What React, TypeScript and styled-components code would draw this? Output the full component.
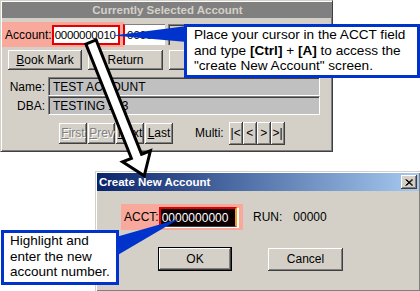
import React from "react";
import styled, { createGlobalStyle } from "styled-components";

const Global = createGlobalStyle`
  html, body { margin: 0; padding: 0; background: #fff; }
  body { width: 420px; height: 291px; overflow: hidden; font-family: "Liberation Sans", Arial, sans-serif; }
`;

const Canvas = styled.div`
  position: relative;
  width: 420px;
  height: 291px;
  background: #fff;
  overflow: hidden;
`;

const WinFrame = styled.div<{ $x: number; $y: number; $w: number; $h: number }>`
  position: absolute;
  left: ${(p) => p.$x}px;
  top: ${(p) => p.$y}px;
  width: ${(p) => p.$w}px;
  height: ${(p) => p.$h}px;
  box-sizing: border-box;
  background: #d4d0c8;
  border: 1px solid;
  border-color: #d4d0c8 #404040 #404040 #d4d0c8;
  box-shadow: inset 1px 1px #fff, inset -1px -1px #808080;
  padding: 1px;
  display: flex;
  flex-direction: column;
  font-size: 11px;
  color: #000;
`;

const InactiveTitle = styled.div`
  height: 16px;
  background: #808080;
  color: #d4d0c8;
  font-weight: bold;
  font-size: 11.5px;
  display: flex;
  align-items: center;
  justify-content: center;
  padding-left: 2px;
`;

const ActiveTitle = styled.div`
  height: 18px;
  background: linear-gradient(to right, #0a246a, #a6caf0);
  color: #fff;
  font-weight: bold;
  font-size: 11.5px;
  display: flex;
  align-items: center;
  justify-content: space-between;
  padding: 0 2px 0 2px;
`;

const CloseBtn = styled.div`
  width: 16px;
  height: 14px;
  box-sizing: border-box;
  background: #d4d0c8;
  box-shadow: inset -1px -1px #404040, inset 1px 1px #fff, inset -2px -2px #808080;
  display: flex;
  align-items: center;
  justify-content: center;
`;

const Row = styled.div<{ $mt: number; $h: number; $pl?: number; $gap?: number }>`
  display: flex;
  align-items: center;
  margin-top: ${(p) => p.$mt}px;
  height: ${(p) => p.$h}px;
  padding-left: ${(p) => p.$pl ?? 0}px;
  gap: ${(p) => p.$gap ?? 0}px;
`;

const Highlight = styled.div<{ $w: number; $h: number; $pl: number; $pr: number }>`
  display: flex;
  align-items: center;
  justify-content: space-between;
  box-sizing: border-box;
  width: ${(p) => p.$w}px;
  height: ${(p) => p.$h}px;
  padding: 0 ${(p) => p.$pr}px 0 ${(p) => p.$pl}px;
  background: #f9a99b;
  font-size: 12px;
`;

const AcctInput = styled.div`
  box-sizing: border-box;
  width: 69px;
  height: 20px;
  border: 2px solid #e40000;
  background: #fff;
  font-size: 11.5px;
  letter-spacing: -0.3px;
  display: flex;
  align-items: center;
  padding-left: 1px;
`;

const PlainInput = styled.div<{ $w: number; $gray?: boolean }>`
  box-sizing: border-box;
  width: ${(p) => p.$w}px;
  height: 21px;
  background: ${(p) => (p.$gray ? "#d4d0c8" : "#fff")};
  border-top: 1px solid #808080;
  border-left: ${(p) => (p.$gray ? "1px solid #808080" : "2px solid #e40000")};
  box-shadow: ${(p) => (p.$gray ? "inset 1px 1px #404040" : "none")};
  font-size: 11.5px;
  display: flex;
  align-items: center;
  padding-left: 2px;
`;

const Button = styled.div<{ $w: number; $h: number; $default?: boolean; $disabled?: boolean }>`
  box-sizing: border-box;
  width: ${(p) => p.$w}px;
  height: ${(p) => p.$h}px;
  background: #d4d0c8;
  border: ${(p) => (p.$default ? "1px solid #000" : "none")};
  box-shadow: inset -1px -1px #404040, inset 1px 1px #fff, inset -2px -2px #808080;
  display: flex;
  align-items: center;
  justify-content: center;
  font-size: 12px;
  color: ${(p) => (p.$disabled ? "#808080" : "#000")};
  text-shadow: ${(p) => (p.$disabled ? "1px 1px #fff" : "none")};
  flex-shrink: 0;
`;

const U = styled.span`
  text-decoration: underline;
`;

const FieldLabel = styled.div`
  width: 43px;
  text-align: right;
  font-size: 12px;
  margin-right: 3px;
`;

const Field = styled.div<{ $h: number }>`
  box-sizing: border-box;
  width: 272px;
  height: ${(p) => p.$h}px;
  background: #c0c0c0;
  border-top: 1px solid #808080;
  border-left: 1px solid #808080;
  border-right: 1px solid #fff;
  border-bottom: 1px solid #fff;
  box-shadow: inset 1px 1px #404040;
  font-size: 12px;
  display: flex;
  align-items: center;
  padding-left: 4px;
`;

const NavGroup = styled.div`
  display: flex;
  gap: 1px;
  margin-left: 57px;
`;

const MultiLabel = styled.div`
  font-size: 12px;
  margin-left: 22px;
  margin-right: 5px;
`;

const MultiGroup = styled.div`
  display: flex;
`;

const DlgBody = styled.div`
  display: flex;
  flex-direction: column;
`;

const DlgInput = styled.div`
  box-sizing: border-box;
  width: 79px;
  height: 20px;
  background: #0c0000;
  color: #fff;
  border-top: 2px solid #e40000;
  border-left: 2px solid #e40000;
  border-right: 2px solid #f0a020;
  border-bottom: 1px solid #404040;
  box-shadow: 2px 1px 0 #fff;
  font-size: 12px;
  display: flex;
  align-items: center;
  padding-left: 1px;
`;

const RunLabel = styled.div`
  font-size: 12px;
  margin-left: 10px;
  display: flex;
  gap: 11px;
`;

const Callout = styled.div<{ $x: number; $y: number; $w: number; $h: number; $pl: number; $fs: number }>`
  position: absolute;
  left: ${(p) => p.$x}px;
  top: ${(p) => p.$y}px;
  width: ${(p) => p.$w}px;
  height: ${(p) => p.$h}px;
  box-sizing: border-box;
  border: 3px solid #0033cc;
  background: #fff;
  padding: 0 0 0 ${(p) => p.$pl}px;
  font-size: ${(p) => p.$fs}px;
  line-height: 15.5px;
  color: #000;
  white-space: nowrap;
`;

const Overlay = styled.svg`
  position: absolute;
  left: 0;
  top: 0;
  pointer-events: none;
`;

export default function App() {
  return (
    <Canvas>
      <Global />
      <WinFrame $x={0} $y={0} $w={333} $h={152}>
        <InactiveTitle>Currently Selected Account</InactiveTitle>
        <Row $mt={4} $h={25}>
          <Highlight $w={122} $h={25} $pl={3} $pr={4}>
            <span>Account:</span>
            <AcctInput>0000000010</AcctInput>
          </Highlight>
          <PlainInput $w={42} style={{ marginLeft: -1 }}>00000</PlainInput>
          <PlainInput $w={16} $gray style={{ marginLeft: 3 }}>0</PlainInput>
        </Row>
        <Row $mt={3} $h={20} $pl={6} $gap={6}>
          <Button $w={74} $h={20}><span><U>B</U>ook Mark</span></Button>
          <Button $w={75} $h={20}>Return</Button>
          <Button $w={75} $h={20} aria-hidden="true" />
        </Row>
        <Row $mt={7} $h={19}>
          <FieldLabel>Name:</FieldLabel>
          <Field $h={19}>TEST ACCOUNT</Field>
        </Row>
        <Row $mt={0} $h={19}>
          <FieldLabel>DBA:</FieldLabel>
          <Field $h={19}>TESTING 123</Field>
        </Row>
        <Row $mt={7} $h={22}>
          <NavGroup>
            <Button $w={28} $h={21} $disabled><span><U>F</U>irst</span></Button>
            <Button $w={27} $h={21} $disabled><span><U>P</U>rev</span></Button>
            <Button $w={28} $h={21}><span><U>N</U>ext</span></Button>
            <Button $w={28} $h={21}><span><U>L</U>ast</span></Button>
          </NavGroup>
          <MultiLabel>Multi:</MultiLabel>
          <MultiGroup>
            <Button $w={14} $h={23}>|&lt;</Button>
            <Button $w={14} $h={23}>&lt;</Button>
            <Button $w={14} $h={23}>&gt;</Button>
            <Button $w={14} $h={23}>&gt;|</Button>
          </MultiGroup>
        </Row>
      </WinFrame>

      <WinFrame $x={95} $y={171} $w={326} $h={121}>
        <ActiveTitle>
          <span>Create New Account</span>
          <CloseBtn>
            <svg width="8" height="7" viewBox="0 0 8 7">
              <path d="M0.5 0.5 L7 6.5 M1.5 0.5 L8 6.5 M7 0.5 L0.5 6.5 M8 0.5 L1.5 6.5" stroke="#000" strokeWidth="1" />
            </svg>
          </CloseBtn>
        </ActiveTitle>
        <DlgBody>
          <Row $mt={13} $h={26} $pl={24}>
            <Highlight $w={122} $h={26} $pl={3} $pr={6}>
              <span>ACCT:</span>
              <DlgInput>0000000000</DlgInput>
            </Highlight>
            <RunLabel>
              <span>RUN:</span>
              <span>00000</span>
            </RunLabel>
          </Row>
          <Row $mt={17} $h={24} $pl={61} $gap={36}>
            <Button $w={74} $h={24} $default>OK</Button>
            <Button $w={75} $h={23}>Cancel</Button>
          </Row>
        </DlgBody>
      </WinFrame>

      <Overlay width="420" height="291" viewBox="0 0 420 291">
        <polygon points="113,35.5 187,26 187,42" fill="#0033cc" />
        <polygon points="116,237 179,219 116,256" fill="#0033cc" />
        <g transform="translate(91,42) rotate(-21.7)">
          <polygon
            points="-5.5,0 5.5,0 5.5,123 15,123 0,144 -15,123 -5.5,123"
            fill="#fff"
            stroke="#000"
            strokeWidth="3"
            strokeLinejoin="miter"
          />
        </g>
      </Overlay>

      <Callout $x={184} $y={24} $w={236} $h={54} $pl={7} $fs={13.6}>
        Place your cursor in the ACCT field
        <br />
        and type <b>[Ctrl]</b> + <b>[A]</b> to access the
        <br />
        "create New Account" screen.
      </Callout>
      <Callout $x={1} $y={230} $w={118} $h={55} $pl={6} $fs={13.5}>
        Highlight and
        <br />
        enter the new
        <br />
        account number.
      </Callout>
    </Canvas>
  );
}
